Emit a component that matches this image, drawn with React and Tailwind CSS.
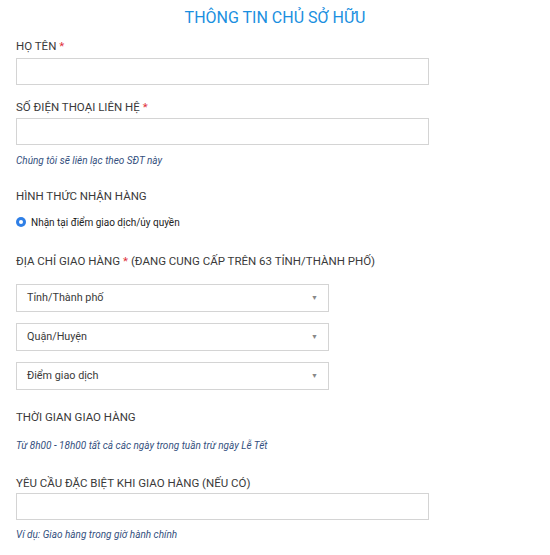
function Label({ children, required, extra }) {
  return (
    <label className="block text-[11.5px] leading-[16px] text-[#3a3a3a] uppercase">
      {children}
      {required && <span className="text-[#e0303b] ml-[3px]">*</span>}
      {extra && <span> {extra}</span>}
    </label>
  );
}

function Hint({ children }) {
  return <p className="text-[10px] leading-[14px] italic text-[#34507e]">{children}</p>;
}

function TextInput() {
  return <input type="text" className="block w-[413px] h-[27px] border border-[#d4d4d4] bg-white outline-none" />;
}

function Select({ label }) {
  return (
    <div className="flex items-center justify-between w-[313px] h-[28px] border border-[#d4d4d4] bg-white pl-[10px] pr-[10px]">
      <span className="text-[10.8px] text-[#3a3a3a]">{label}</span>
      <span className="text-[7px] text-[#888]">▼</span>
    </div>
  );
}

export default function App() {
  return (
    <div className="w-[550px] h-[555px] bg-white font-['Roboto',sans-serif] px-[16px] pt-[8px] overflow-hidden">
      <h1 className="text-center text-[16px] leading-[20px] text-[#1a8fe0]">THÔNG TIN CHỦ SỞ HỮU</h1>

      <div className="mt-[10px]"><Label required>Họ tên</Label></div>
      <div className="mt-[4px]"><TextInput /></div>

      <div className="mt-[14px]"><Label required>Số điện thoại liên hệ</Label></div>
      <div className="mt-[3px]"><TextInput /></div>
      <div className="mt-[9px]"><Hint>Chúng tôi sẽ liên lạc theo SĐT này</Hint></div>

      <div className="mt-[20px]"><Label>Hình thức nhận hàng</Label></div>
      <div className="mt-[11px] h-[14px] flex items-center gap-[5px]">
        <span className="w-[10px] h-[10px] rounded-full bg-[#2f7fe6] flex items-center justify-center">
          <span className="w-[4px] h-[4px] rounded-full bg-white" />
        </span>
        <span className="text-[10px] text-[#222]">Nhận tại điểm giao dịch/ủy quyền</span>
      </div>

      <div className="mt-[24px]"><Label required extra="(Đang cung cấp trên 63 tỉnh/thành phố)">Địa chỉ giao hàng</Label></div>
      <div className="mt-[15px] flex flex-col gap-[11px]">
        <Select label="Tỉnh/Thành phố" />
        <Select label="Quận/Huyện" />
        <Select label="Điểm giao dịch" />
      </div>

      <div className="mt-[19px]"><Label>Thời gian giao hàng</Label></div>
      <div className="mt-[14px]"><Hint>Từ 8h00 - 18h00 tất cả các ngày trong tuần trừ ngày Lễ Tết</Hint></div>

      <div className="mt-[22px]"><Label>Yêu cầu đặc biệt khi giao hàng (nếu có)</Label></div>
      <div className="mt-[2px]"><TextInput /></div>
      <div className="mt-[8px]"><Hint>Ví dụ: Giao hàng trong giờ hành chính</Hint></div>
    </div>
  );
}
